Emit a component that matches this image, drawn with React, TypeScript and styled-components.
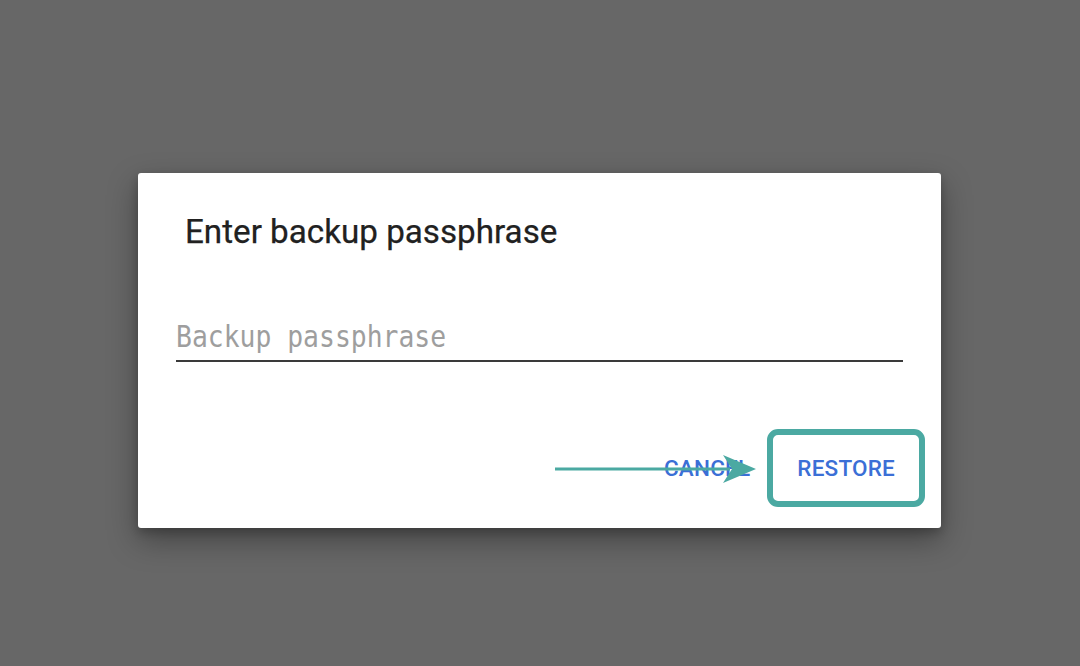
import React from "react";
import styled, { createGlobalStyle } from "styled-components";

const Global = createGlobalStyle`
  html, body { margin: 0; padding: 0; }
  body { background: #676767; width: 1080px; height: 666px; overflow: hidden; }
`;

const Screen = styled.div`
  width: 1080px;
  height: 666px;
  display: flex;
  justify-content: center;
  padding-top: 173px;
  box-sizing: border-box;
`;

const Dialog = styled.div`
  margin-left: -1px;
  width: 803px;
  height: 355px;
  background: #ffffff;
  border-radius: 3px;
  box-shadow: 0 12px 30px rgba(0, 0, 0, 0.35), 0 4px 10px rgba(0, 0, 0, 0.2);
  box-sizing: border-box;
  display: flex;
  flex-direction: column;
  padding: 0 38px;
`;

const Title = styled.h2`
  margin: 40px 0 0 9px;
  font-family: Roboto, "Liberation Sans", sans-serif;
  font-weight: 400;
  font-size: 33.2px;
  line-height: 38px;
  color: #212121;
  -webkit-text-stroke: 0.25px #212121;
`;

const Field = styled.div`
  margin-top: 68px;
  border-bottom: 2px solid #3a3a3a;
  height: 43px;
  display: flex;
  align-items: flex-end;
  padding-bottom: 6px;
  box-sizing: border-box;
`;

const Placeholder = styled.span`
  display: inline-block;
  font-family: "DejaVu Sans Mono", "Liberation Mono", monospace;
  font-size: 26.4px;
  line-height: 32px;
  color: #9e9e9e;
  transform: scaleY(1.12);
  transform-origin: 0 80%;
`;

const Actions = styled.div`
  margin-top: 67px;
  margin-right: -22px;
  display: flex;
  justify-content: flex-end;
  align-items: center;
  gap: 13px;
  position: relative;
`;

const TextButton = styled.button<{ $highlight?: boolean }>`
  font-family: Roboto, "Liberation Sans", sans-serif;
  font-weight: 500;
  font-size: 22.5px;
  letter-spacing: 0.2px;
  color: #3b6fd6;
  background: #fff;
  box-sizing: border-box;
  height: 78px;
  padding: 0 ${(p) => (p.$highlight ? "24px" : "4px")};
  border: ${(p) => (p.$highlight ? "6px solid #4ba9a2" : "none")};
  border-radius: 11px;
  cursor: pointer;
`;

const Arrow = styled.svg`
  position: absolute;
  left: 379px;
  top: 25px;
  overflow: visible;
`;

export default function App() {
  return (
    <>
      <Global />
      <Screen>
        <Dialog>
          <Title>Enter backup passphrase</Title>
          <Field>
            <Placeholder>Backup passphrase</Placeholder>
          </Field>
          <Actions>
            <TextButton>CANCEL</TextButton>
            <TextButton $highlight>RESTORE</TextButton>
            <Arrow width="205" height="30" viewBox="0 0 205 30">
              <line x1="0" y1="15" x2="175" y2="15" stroke="#4ba9a2" strokeWidth="3" />
              <polygon points="168,1 201,15 168,29 177,15" fill="#4ba9a2" />
            </Arrow>
          </Actions>
        </Dialog>
      </Screen>
    </>
  );
}
